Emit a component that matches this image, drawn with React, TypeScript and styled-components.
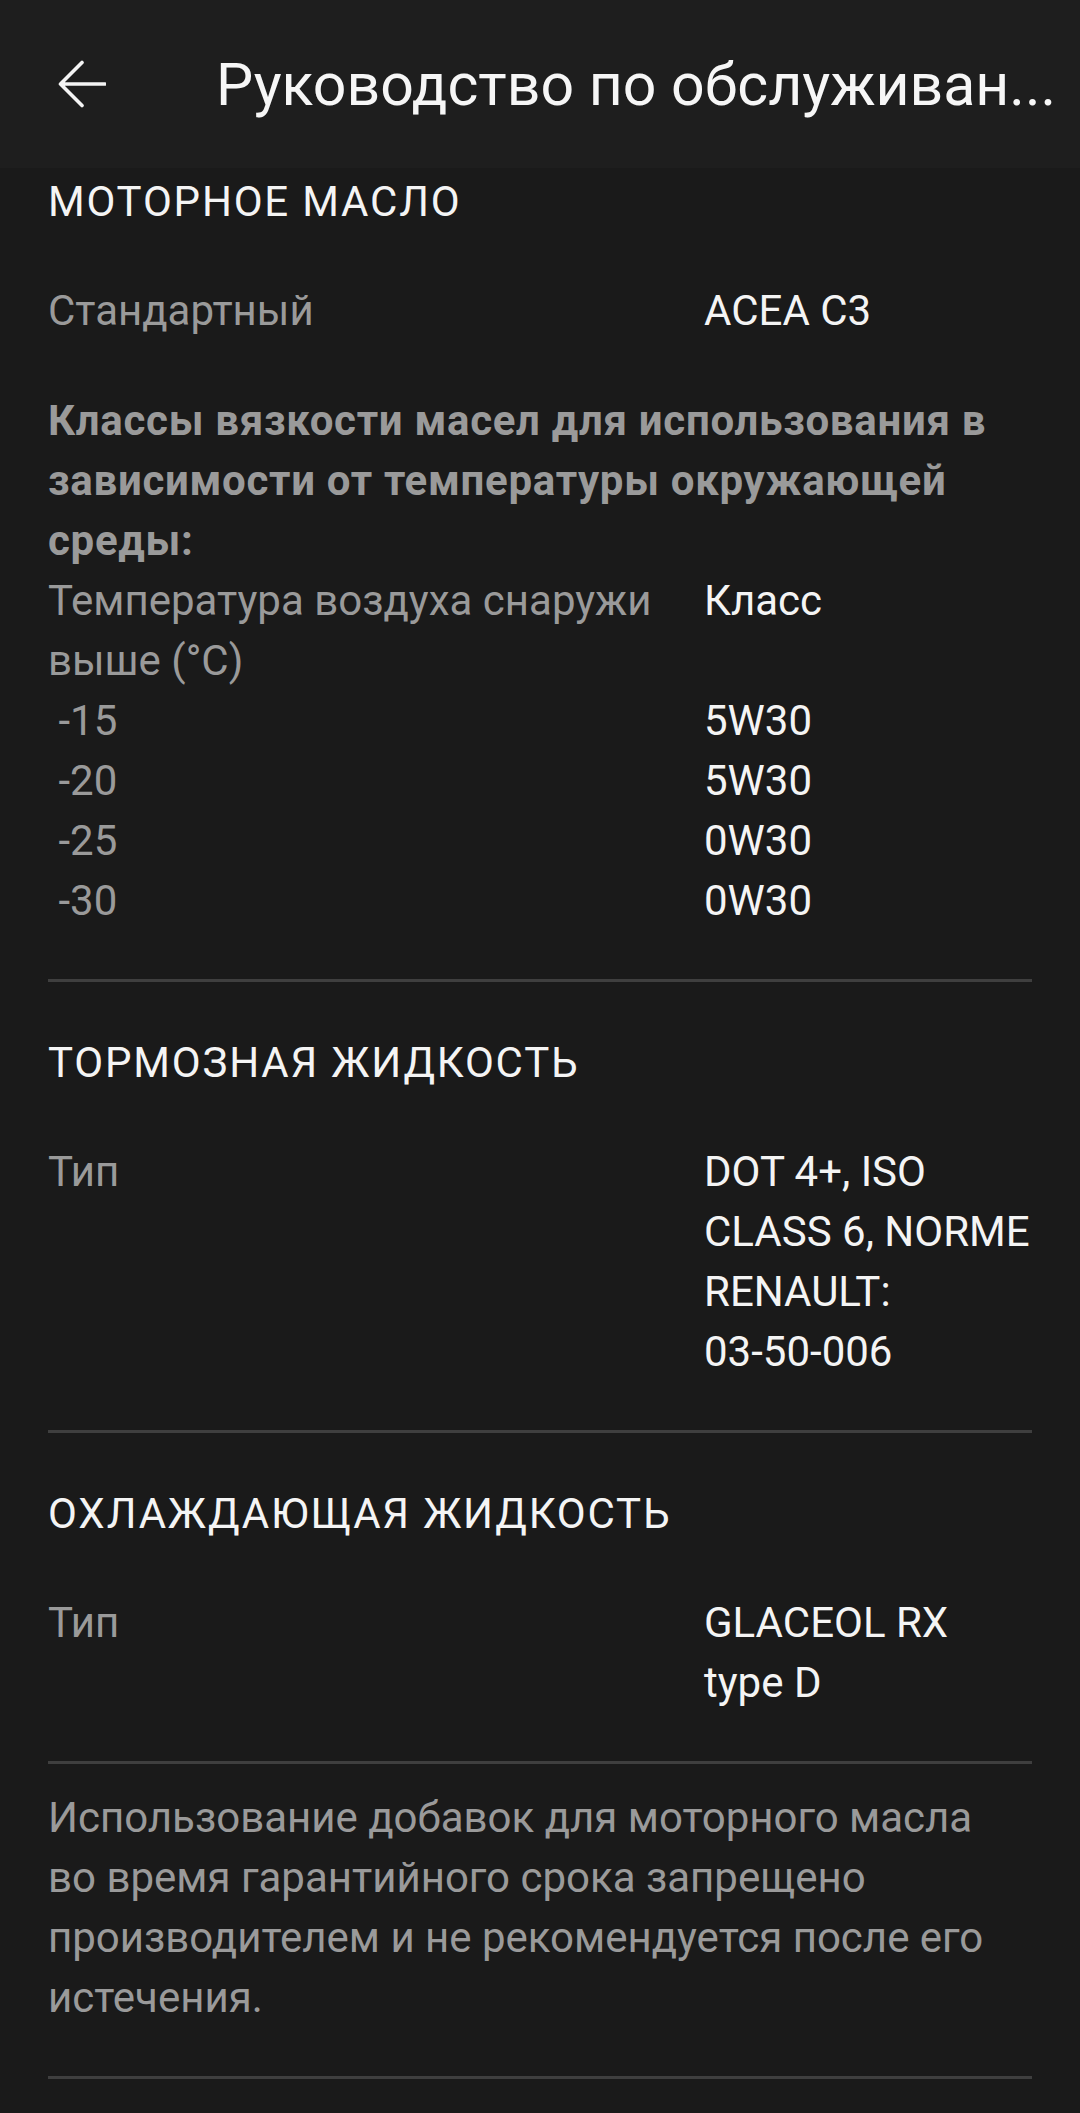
import React from 'react';
import styled, { createGlobalStyle } from 'styled-components';

const GlobalStyle = createGlobalStyle`
  html, body {
    margin: 0;
    padding: 0;
    background: #1a1a1a;
  }
  body {
    font-family: Roboto, 'Noto Sans', sans-serif;
    -webkit-font-smoothing: antialiased;
  }
`;

type Row = { label: string; value: string };

const TEMPS: Row[] = [
  { label: ' -15', value: '5W30' },
  { label: ' -20', value: '5W30' },
  { label: ' -25', value: '0W30' },
  { label: ' -30', value: '0W30' },
];

const BackArrow = () => (
  <svg width="48" height="48" viewBox="0 0 48 48" fill="none">
    <path
      d="M47 24H3M24 2.5L2.5 24L24 45.5"
      stroke="#f4f4f4"
      strokeWidth="3.6"
      strokeLinecap="round"
      strokeLinejoin="round"
    />
  </svg>
);

export default function App() {
  return (
    <Page>
      <GlobalStyle />
      <Header>
        <BackButton aria-label="Назад">
          <BackArrow />
        </BackButton>
        <Title>Руководство по обслуживан...</Title>
      </Header>

      <Content>
        <Section>
          <SectionTitle>МОТОРНОЕ МАСЛО</SectionTitle>
          <SpecRow>
            <Label>Стандартный</Label>
            <Value>ACEA C3</Value>
          </SpecRow>
          <Note>
            Классы вязкости масел для использования в зависимости от
            температуры окружающей среды:
          </Note>
          <Table>
            <Label>Температура воздуха снаружи выше (°C)</Label>
            <Value>Класс</Value>
            {TEMPS.map((t) => (
              <React.Fragment key={t.label}>
                <Label $pre>{t.label}</Label>
                <Value>{t.value}</Value>
              </React.Fragment>
            ))}
          </Table>
        </Section>
        <Divider />

        <Section>
          <SectionTitle>ТОРМОЗНАЯ ЖИДКОСТЬ</SectionTitle>
          <SpecRow>
            <Label>Тип</Label>
            <Value>
              DOT 4+, ISO CLASS 6, NORME RENAULT: <NoWrap>03-50-006</NoWrap>
            </Value>
          </SpecRow>
        </Section>
        <Divider />

        <Section>
          <SectionTitle>ОХЛАЖДАЮЩАЯ ЖИДКОСТЬ</SectionTitle>
          <SpecRow>
            <Label>Тип</Label>
            <Value>GLACEOL RX type D</Value>
          </SpecRow>
        </Section>
        <Divider />

        <Footnote>
          Использование добавок для моторного масла во время гарантийного
          срока запрещено производителем и не рекомендуется после его
          истечения.
        </Footnote>
        <Divider />
      </Content>
    </Page>
  );
}

const Page = styled.div`
  min-height: 2113px;
  background: #1a1a1a;
  color: #f4f4f4;
`;

const Header = styled.header`
  height: 168px;
  display: flex;
  align-items: center;
  background: #1e1e1e;
  padding: 0 24px 0 58px;
  box-sizing: border-box;
`;

const BackButton = styled.button`
  width: 48px;
  height: 48px;
  padding: 0;
  border: none;
  background: none;
  display: flex;
  align-items: center;
  justify-content: center;
  flex-shrink: 0;
`;

const Title = styled.h1`
  margin: 0 0 0 110px;
  font-size: 59px;
  font-weight: 400;
  line-height: 1;
  color: #f6f6f6;
  white-space: nowrap;
`;

const Content = styled.main`
  padding: 4px 48px 0;
`;

const Section = styled.section`
  padding-bottom: 48px;
`;

const SectionTitle = styled.h2`
  margin: 0 0 49px;
  font-size: 42px;
  font-weight: 400;
  line-height: 60px;
  letter-spacing: 1.8px;
  color: #f4f4f4;
`;

const SpecRow = styled.div`
  display: grid;
  grid-template-columns: 2fr 1fr;
  font-size: 42px;
  line-height: 60px;
`;

const Table = styled.div`
  display: grid;
  grid-template-columns: 2fr 1fr;
  font-size: 42px;
  line-height: 60px;
`;

const Label = styled.div<{ $pre?: boolean }>`
  color: #9a9a9a;
  padding-right: 24px;
  white-space: ${(p) => (p.$pre ? 'pre' : 'normal')};
`;

const Value = styled.div`
  color: #f4f4f4;
`;

const NoWrap = styled.span`
  white-space: nowrap;
`;

const Note = styled.p`
  margin: 50px 0 0;
  font-size: 42px;
  font-weight: 700;
  line-height: 60px;
  letter-spacing: 0.7px;
  color: #9a9a9a;
`;

const Divider = styled.hr`
  margin: 0 0 51px;
  border: none;
  height: 3px;
  background: #3f3f3f;
`;

const Footnote = styled.p`
  margin: -27px 0 48px;
  padding-right: 22px;
  font-size: 42px;
  line-height: 60px;
  color: #9a9a9a;
`;
